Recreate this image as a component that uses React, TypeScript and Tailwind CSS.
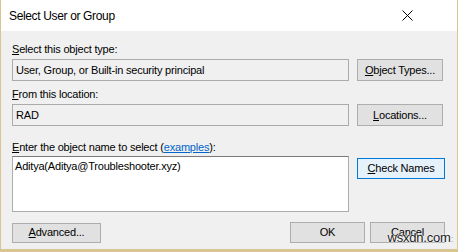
const FONT = "font-['Segoe_UI','Liberation_Sans',Arial,sans-serif]";

function Btn({
  children,
  className = '',
}: {
  children: React.ReactNode;
  className?: string;
}) {
  return (
    <div
      className={`flex items-center justify-center border border-[#adadad] bg-[#e1e1e1] text-[11px] text-black ${className}`}
    >
      {children}
    </div>
  );
}

function Field({ value }: { value: string }) {
  return (
    <div className="flex h-[22px] w-[337px] items-center border border-[#ababab] bg-[#f0f0f0] px-[3px] text-[11px] text-black">
      {value}
    </div>
  );
}

export default function App() {
  return (
    <div className={`h-[252px] w-[458px] overflow-hidden bg-[#d9c591] tracking-[-0.2px] ${FONT}`}>
      <div className="mx-[1px] h-[249px] w-[456px] bg-[#f0f0f0]">
        {/* title bar */}
        <div className="flex h-[31px] items-center justify-between bg-white pl-[8px] pr-[44px]">
          <span className="text-[12px] tracking-[-0.35px] text-black">Select User or Group</span>
          <svg width="11" height="11" viewBox="0 0 11 11" className="text-black">
            <path d="M0.5 0.5 L10.5 10.5 M10.5 0.5 L0.5 10.5" stroke="currentColor" strokeWidth="1" />
          </svg>
        </div>

        <div className="flex flex-col px-[11px] pt-[11px] text-[11px] text-black">
          <div className="leading-[14px]">
            <span className="underline">S</span>elect this object type:
          </div>
          <div className="mt-[3px] flex gap-[8px]">
            <Field value="User, Group, or Built-in security principal" />
            <Btn className="h-[22px] w-[86px]">
              <span>
                <span className="underline">O</span>bject Types...
              </span>
            </Btn>
          </div>

          <div className="mt-[6px] leading-[14px]">
            <span className="underline">F</span>rom this location:
          </div>
          <div className="mt-[3px] flex gap-[8px]">
            <Field value="RAD" />
            <Btn className="h-[22px] w-[86px]">
              <span>
                <span className="underline">L</span>ocations...
              </span>
            </Btn>
          </div>

          <div className="mt-[14px] leading-[14px]">
            <span className="underline">E</span>nter the object name to select (
            <span className="text-[#0066cc] underline">examples</span>):
          </div>
          <div className="mt-[2px] flex items-start gap-[8px]">
            <div className="h-[56px] w-[337px] border border-[#abadb3] border-t-[#7a7a7a] bg-white px-[2px] pt-[2px] leading-[14px]">
              Aditya(Aditya@Troubleshooter.xyz)
            </div>
            <div className="mt-[2px] flex h-[21px] w-[88px] items-center justify-center border border-[#0078d7] bg-[#e5f1fb] text-[11px]">
              <span>
                <span className="underline">C</span>heck Names
              </span>
            </div>
          </div>

          <div className="mt-[10px] flex items-center justify-between pr-[1px]">
            <Btn className="h-[20px] w-[89px]">
              <span>
                <span className="underline">A</span>dvanced...
              </span>
            </Btn>
            <div className="relative flex gap-[5px]">
              <Btn className="h-[21px] w-[75px]">OK</Btn>
              <Btn className="h-[21px] w-[75px]">Cancel</Btn>
              <div className="absolute right-[-8px] top-[9px] text-[13px] leading-[14px] tracking-[-0.2px] text-[#222] [text-shadow:0_0_2px_#fff,0_0_2px_#fff]">
                wsxdn.com<span className="text-[9px] text-[#999]">:</span>
              </div>
            </div>
          </div>
        </div>
      </div>
    </div>
  );
}
